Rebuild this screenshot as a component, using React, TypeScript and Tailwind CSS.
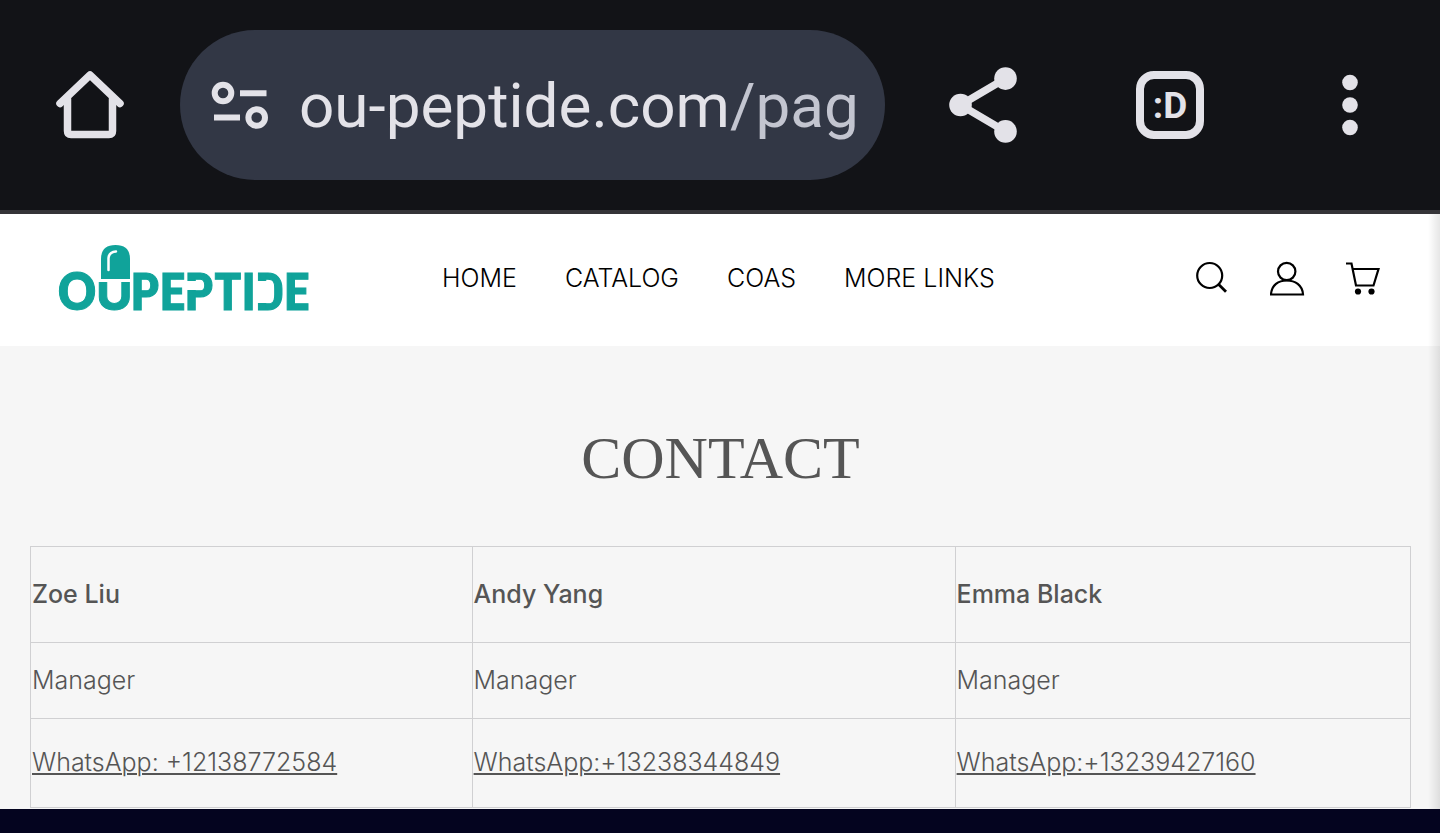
import React from 'react';

const contacts = [
  { name: 'Zoe Liu', role: 'Manager', label: 'WhatsApp: +12138772584', phone: '12138772584' },
  { name: 'Andy Yang', role: 'Manager', label: 'WhatsApp:+13238344849', phone: '13238344849' },
  { name: 'Emma Black', role: 'Manager', label: 'WhatsApp:+13239427160', phone: '13239427160' },
];

function BrowserBar() {
  return (
    <div className="flex h-[214px] items-center border-b-4 border-[#353438] bg-[#121317] text-[#e3e2e8]">
      <button aria-label="Home" className="flex w-[180px] shrink-0 justify-center">
        <svg width="72" height="72" viewBox="0 0 72 72" fill="none" stroke="currentColor" strokeWidth="7.5" strokeLinecap="round" strokeLinejoin="round">
          <path d="M6 34.500 36 6 66 34.500" />
          <path d="M13.500 30V62q0 3.500 3.500 3.500H55q3.500 0 3.500-3.500V30" />
        </svg>
      </button>
      <button className="flex h-[150px] min-w-0 flex-1 items-center gap-[30px] rounded-full bg-[#323745] pl-[31px]">
        <svg className="shrink-0" width="58" height="48" viewBox="0 0 58 48" fill="none" stroke="currentColor" strokeWidth="6">
          <circle cx="12" cy="12" r="8.300" />
          <circle cx="45.700" cy="36.500" r="8.300" />
          <path d="M29 12.200H55.500M3 36.500H29" />
        </svg>
        <span className="min-w-0 flex-1 pt-0.5 text-left font-['Roboto',sans-serif] text-[62px] leading-[80px] whitespace-nowrap">
          ou-peptide.com<span className="text-[#c3c5d0]">/pag</span>
        </span>
      </button>
      <button aria-label="Share" className="flex w-[195px] shrink-0 justify-center">
        <svg width="70" height="78" viewBox="0 0 70 78" fill="currentColor">
          <path d="M12.500 39 57.500 12.500M12.500 39 57.500 65.500" stroke="currentColor" strokeWidth="7.500" />
          <circle cx="12.500" cy="39" r="11.300" />
          <circle cx="57.500" cy="12.600" r="11.300" />
          <circle cx="57.500" cy="65.400" r="11.300" />
        </svg>
      </button>
      <button className="flex w-[180px] shrink-0 justify-center">
        <span className="flex size-[68px] items-center justify-center rounded-[18px] border-8 border-current font-['Roboto',sans-serif] text-[37px] leading-none font-bold">:D</span>
      </button>
      <button aria-label="More options" className="flex w-[180px] shrink-0 justify-center">
        <svg width="16" height="62" viewBox="0 0 16 62" fill="currentColor">
          <circle cx="8" cy="8.500" r="7.800" />
          <circle cx="8" cy="31" r="7.800" />
          <circle cx="8" cy="53.500" r="7.800" />
        </svg>
      </button>
    </div>
  );
}

function Logo() {
  return (
    <a href="#" aria-label="OUPEPTIDE" className="block shrink-0">
      <svg className="overflow-visible" width="254" height="70" viewBox="0 0 254 70" fill="#10a39a" stroke="#10a39a" fontWeight="700">
        <text x="-1" y="66" fontFamily="Inter, sans-serif" fontSize="52">O</text>
        <text x="38" y="66" fontFamily="Inter, sans-serif" fontSize="50">U</text>
        <rect x="40" y="20" width="34" height="18" fill="#fff" stroke="none" />
        <path d="M43 35V15Q43 1 57.500 1T72 15V35Z" stroke="none" />
        <path d="M50.500 26V14Q51 8 58 7.500" fill="none" stroke="#fff" strokeWidth="2.500" strokeLinecap="round" />
        <text x="73" y="66" fontFamily="'Roboto Condensed', 'Open Sans Condensed', 'Noto Sans Condensed', 'Noto Sans SemiCondensed', Roboto, sans-serif" fontSize="51">PEPTIDE</text>
        <rect x="127" y="37" width="12" height="9" fill="#fff" stroke="none" />
        <rect x="197" y="37" width="13" height="22" fill="#fff" stroke="none" />
      </svg>
    </a>
  );
}

function SiteHeader() {
  return (
    <header className="flex h-[132px] items-center bg-white pr-[60px] pb-0.5 pl-[58px] text-black">
      <div className="w-[384px] shrink-0"><Logo /></div>
      <nav className="flex flex-1 gap-12 pb-0.5 font-['Inter',sans-serif] text-[25px] leading-8 font-light whitespace-nowrap">
        <a href="#">HOME</a>
        <a href="#">CATALOG</a>
        <a href="#">COAS</a>
        <a href="#">MORE LINKS</a>
      </nav>
      <div className="flex shrink-0 gap-[38px]">
        <button aria-label="Search">
          <svg width="36" height="36" viewBox="0 0 36 36" fill="none" stroke="currentColor" strokeWidth="2.200">
            <circle cx="13.700" cy="14.500" r="12.500" />
            <path d="M22.700 23.500 30 30.700" strokeWidth="2.800" />
          </svg>
        </button>
        <button aria-label="Account">
          <svg width="36" height="36" viewBox="0 0 36 36" fill="none" stroke="currentColor" strokeWidth="2.200">
            <circle cx="16.700" cy="10.500" r="8.700" />
            <path d="M1 33.500C1.500 24 8.500 19.500 16.700 19.500S32.500 24 33 33.500Z" />
          </svg>
        </button>
        <button aria-label="Cart">
          <svg width="36" height="36" viewBox="0 0 36 36" fill="none" stroke="currentColor" strokeWidth="2.200">
            <path d="M2 2.500H7.500L12 24.500H29.500L34.500 8H9" />
            <circle cx="14" cy="30.500" r="3.100" fill="currentColor" stroke="none" />
            <circle cx="27.500" cy="30.500" r="3.100" fill="currentColor" stroke="none" />
          </svg>
        </button>
      </div>
    </header>
  );
}

export default function App() {
  return (
    <div className="flex min-h-screen flex-col bg-[#04041f]">
      <BrowserBar />
      <div className="relative bg-[#f6f6f6] text-[#555]">
        <SiteHeader />
        <main className="pt-20 pr-[29px] pb-px pl-[30px]">
          <h1 className="text-center font-['Liberation_Serif',serif] text-[60px] leading-[64px]">CONTACT</h1>
          <table className="mt-14 w-full table-fixed border-collapse text-left font-['Inter',sans-serif] text-[25px] leading-8 font-light [&_td]:border [&_td]:border-[#d0d0d2] [&_td]:px-px [&_td]:pb-0.5 [&_th]:border [&_th]:border-[#d0d0d2] [&_th]:px-px [&_th]:pb-0.5">
            <colgroup>
              <col className="w-[32%]" />
              <col className="w-[35%]" />
              <col className="w-[33%]" />
            </colgroup>
            <thead>
              <tr className="h-24">
                {contacts.map((c) => <th key={c.name} scope="col" className="font-medium">{c.name}</th>)}
              </tr>
            </thead>
            <tbody>
              <tr className="h-[76px]">
                {contacts.map((c) => <td key={c.name}>{c.role}</td>)}
              </tr>
              <tr className="h-[89px]">
                {contacts.map((c) => (
                  <td key={c.name}>
                    <a href={`https://wa.me/${c.phone}`} className="underline decoration-2 underline-offset-2">{c.label}</a>
                  </td>
                ))}
              </tr>
            </tbody>
          </table>
        </main>
        <div className="pointer-events-none absolute inset-y-0 right-0 w-3 bg-gradient-to-r from-transparent to-black/10" />
      </div>
    </div>
  );
}
